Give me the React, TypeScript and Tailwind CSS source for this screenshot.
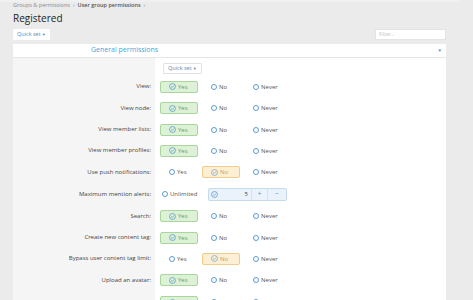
import React from "react";

type State = "yes" | "no" | "never" | "none";

const ROWS: { label: string; value: State; h: string }[] = [
  { label: "View:", value: "yes", h: "h-[21px]" },
  { label: "View node:", value: "yes", h: "h-[22px]" },
  { label: "View member lists:", value: "yes", h: "h-[21px]" },
  { label: "View member profiles:", value: "yes", h: "h-[21px]" },
  { label: "Use push notifications:", value: "no", h: "h-[22px]" },
];

const ROWS_2: { label: string; value: State; h: string }[] = [
  { label: "Search:", value: "yes", h: "h-[22px]" },
  { label: "Create new content tag:", value: "yes", h: "h-[21px]" },
  { label: "Bypass user content tag limit:", value: "no", h: "h-[21px]" },
  { label: "Upload an avatar:", value: "yes", h: "h-[22px]" },
  { label: "", value: "yes", h: "h-[22px]" },
];

function Radio() {
  return <span className="w-[6px] h-[6px] rounded-full border border-[#5c9bd3] bg-white shrink-0" />;
}

function Check({ color = "#5c9bd3" }: { color?: string }) {
  return (
    <svg width="7" height="7" viewBox="0 0 8 8" className="shrink-0">
      <circle cx="4" cy="4" r="3.4" fill="none" stroke={color} strokeWidth="0.9" />
      <path d="M2.4 4.1 L3.6 5.2 L5.7 2.9" fill="none" stroke={color} strokeWidth="0.9" />
    </svg>
  );
}

function Option({ text, kind, on }: { text: string; kind: "yes" | "no" | "never"; on: boolean }) {
  const box = on
    ? kind === "yes"
      ? "bg-[#dcf1d5] border-[#a9d69c] text-[#6c9a62]"
      : "bg-[#fcefd3] border-[#efcb8c] text-[#c6a062]"
    : "border-transparent text-[#555]";
  return (
    <div className={`w-[38px] h-[12px] flex items-center gap-[2px] pl-[8px] border rounded-[2px] ${box}`}>
      {on ? <Check color={kind === "yes" ? "#5c9bd3" : "#7fa7c9"} /> : <Radio />}
      <span className="leading-none">{text}</span>
    </div>
  );
}

function Row({ label, value, h }: { label: string; value: State; h: string }) {
  return (
    <div className={`flex ${h}`}>
      <div className="w-[142px] bg-[#f5f5f5] flex items-center justify-end pr-[4px] text-[#444]">{label}</div>
      <div className="flex items-center gap-[4px] pl-[5px]">
        <Option text="Yes" kind="yes" on={value === "yes"} />
        <Option text="No" kind="no" on={value === "no"} />
        <Option text="Never" kind="never" on={value === "never"} />
      </div>
    </div>
  );
}

export default function App() {
  return (
    <div className="w-[473px] h-[300px] overflow-hidden bg-[#ebebeb] pl-[13px] pr-[27px] text-[6px] font-['Open_Sans','Noto_Sans',sans-serif]">
      <div className="h-[2px] -mx-[13px] bg-[#f0f0f0]" />
      <div className="pt-[1px] text-[5.5px] text-[#8a8a8a] flex gap-[3px] items-center h-[6px]">
        <span>Groups &amp; permissions</span>
        <span>›</span>
        <span className="font-semibold text-[#555]">User group permissions</span>
        <span>›</span>
      </div>
      <h1 className="text-[10px] text-[#222] leading-none mt-[5px] h-[14px]">Registered</h1>
      <div className="flex justify-between items-center mt-[2px] h-[11px]">
        <div className="h-[11px] px-[4px] bg-white flex items-center text-[5.5px] text-[#5a86b3] gap-[1px] rounded-[1px]">
          Quick set <span className="text-[4px]">▼</span>
        </div>
        <div className="h-[11px] w-[71px] bg-white border border-[#e4e4e4] flex items-center pl-[3px] text-[5px] text-[#c2c2c2]">
          Filter...
        </div>
      </div>
      <div className="mt-[4px] bg-white">
        <div className="h-[14px] border-b border-[#e5e5e5] flex items-center justify-between pl-[78px] pr-[4px]">
          <span className="text-[7px] text-[#4aa4de]">General permissions</span>
          <span className="text-[4.5px] text-[#4a90c8]">▼</span>
        </div>
        <div className="flex h-[18px]">
          <div className="w-[142px] bg-[#f5f5f5]" />
          <div className="pl-[8px] pt-[5px]">
            <div className="h-[11px] px-[4px] border border-[#e2e2e2] flex items-center gap-[1px] text-[5.5px] text-[#5a86b3] rounded-[1px]">
              Quick set <span className="text-[4px]">▼</span>
            </div>
          </div>
        </div>
        {ROWS.map((r) => (
          <Row key={r.label} {...r} />
        ))}
        <div className="flex h-[22px]">
          <div className="w-[142px] bg-[#f5f5f5] flex items-center justify-end pr-[4px] text-[#444]">
            Maximum mention alerts:
          </div>
          <div className="flex items-center pl-[7px] gap-[2px] text-[#555]">
            <Radio />
            <span className="w-[36px]">Unlimited</span>
            <div className="w-[79px] h-[13px] flex items-center bg-[#eaf2fb] border border-[#c6daee] rounded-[2px]">
              <div className="pl-[2px]">
                <Check />
              </div>
              <div className="flex-1 text-right pr-[3px] text-[#444]">5</div>
              <div className="w-[16px] h-full flex items-center justify-center border-l border-[#d3e2f1] text-[#5c9bd3] text-[7px]">+</div>
              <div className="w-[19px] h-full flex items-center justify-center border-l border-[#d3e2f1] text-[#5c9bd3] text-[7px]">−</div>
            </div>
          </div>
        </div>
        {ROWS_2.map((r, i) => (
          <Row key={i} {...r} />
        ))}
      </div>
    </div>
  );
}
